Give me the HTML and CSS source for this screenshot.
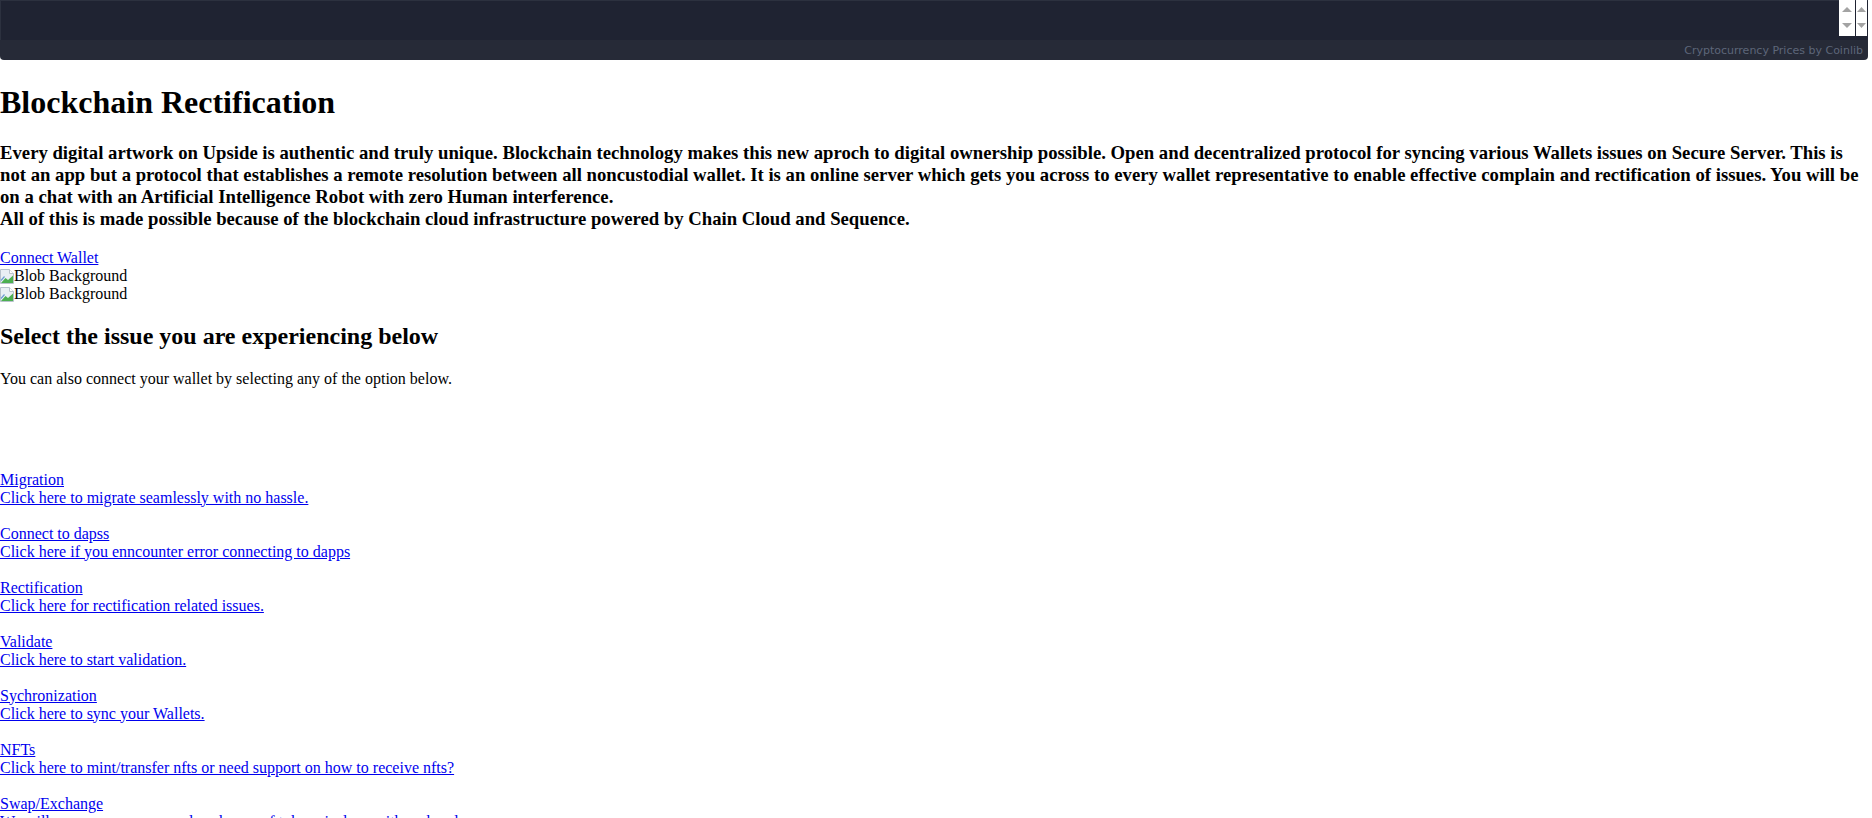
FILE: index.html
```html
<!DOCTYPE html>
<html lang="en">
<head>
<meta charset="utf-8">
<title>Blockchain Rectification</title>
<link rel="stylesheet" href="styles.css">
</head>
<body>
<div class="ticker">
  <div class="ticker-main">
    <div class="spin">
      <svg width="16" height="36" viewBox="0 0 16 36"><polygon points="3,12 13,12 8,7" fill="#a3a3a3"/><polygon points="3,23 13,23 8,28" fill="#a3a3a3"/></svg>
    </div>
    <div class="spin spin-b">
      <svg width="11" height="36" viewBox="0 0 11 36"><polygon points="1,12 10,12 5.5,7" fill="#a3a3a3"/><polygon points="1,23 10,23 5.5,28" fill="#a3a3a3"/></svg>
    </div>
  </div>
  <div class="ticker-foot">Cryptocurrency Prices by Coinlib</div>
</div>

<h1 class="title">Blockchain Rectification</h1>
<h3 class="intro">Every digital artwork on Upside is authentic and truly unique. Blockchain technology makes this new aproch to digital ownership possible. Open and decentralized protocol for syncing various Wallets issues on Secure Server. This is not an app but a protocol that establishes a remote resolution between all noncustodial wallet. It is an online server which gets you across to every wallet representative to enable effective complain and rectification of issues. You will be on a chat with an Artificial Intelligence Robot with zero Human interference.<br>All of this is made possible because of the blockchain cloud infrastructure powered by Chain Cloud and Sequence.</h3>

<a class="connect" href="#">Connect Wallet</a>
<div class="blob"><svg class="broken" width="14" height="16" viewBox="0 0 14 16"><path d="M0.5 1.5h9l4 4v10h-13z" fill="#e9eff4" stroke="#b8c2cc"/><path d="M9.5 1.5v4h4" fill="#ffffff" stroke="#b8c2cc"/><path d="M1 15l4.5-5 2.5 2 5-4.5v7.5z" fill="#4caf50"/><path d="M1 12.5l3.5-4" stroke="#6b9bd1" stroke-width="1.2"/></svg><span>Blob Background</span></div>
<div class="blob"><svg class="broken" width="14" height="16" viewBox="0 0 14 16"><path d="M0.5 1.5h9l4 4v10h-13z" fill="#e9eff4" stroke="#b8c2cc"/><path d="M9.5 1.5v4h4" fill="#ffffff" stroke="#b8c2cc"/><path d="M1 15l4.5-5 2.5 2 5-4.5v7.5z" fill="#4caf50"/><path d="M1 12.5l3.5-4" stroke="#6b9bd1" stroke-width="1.2"/></svg><span>Blob Background</span></div>

<h2 class="select">Select the issue you are experiencing below</h2>
<p class="sub">You can also connect your wallet by selecting any of the option below.</p>

<div class="options">
  <div class="option"><a href="#">Migration<br>Click here to migrate seamlessly with no hassle.</a></div>
  <div class="option"><a href="#">Connect to dapss<br>Click here if you enncounter error connecting to dapps</a></div>
  <div class="option"><a href="#">Rectification<br>Click here for rectification related issues.</a></div>
  <div class="option"><a href="#">Validate<br>Click here to start validation.</a></div>
  <div class="option"><a href="#">Sychronization<br>Click here to sync your Wallets.</a></div>
  <div class="option"><a href="#">NFTs<br>Click here to mint/transfer nfts or need support on how to receive nfts?</a></div>
  <div class="option"><a href="#">Swap/Exchange<br>We will ensure your swap and exchange of tokens is done with no hassle.</a></div>
</div>
</body>
</html>
```

FILE: styles.css
```css
html, body {
  margin: 0;
  padding: 0;
  background: #ffffff;
}

body {
  font-family: "Liberation Serif", "Times New Roman", serif;
  font-size: 16px;
  color: #000000;
}

a {
  color: #0000ee;
}

.ticker {
  width: 1868px;
  height: 60px;
  background: #262a37;
  border-radius: 0 0 4px 4px;
  overflow: hidden;
  display: flex;
  flex-direction: column;
}

.ticker-main {
  height: 40px;
  box-sizing: border-box;
  background: #1f2332;
  border-top: 1px solid #2c313f;
  border-left: 1px solid #2c313f;
  display: flex;
  justify-content: flex-end;
  align-items: flex-start;
}

.spin {
  width: 16px;
  height: 36px;
  background: #ffffff;
  margin-top: -1px;
  margin-right: 1px;
}

.spin-b {
  width: 11px;
  margin-right: 1px;
}

.spin svg {
  display: block;
}

.ticker-foot {
  flex: 1;
  display: flex;
  align-items: center;
  justify-content: flex-end;
  padding-right: 5px;
  font-family: "DejaVu Sans", Verdana, sans-serif;
  font-size: 11px;
  color: #5d6679;
}

.title {
  font-size: 32px;
  margin: 24px 0 21px;
}

.intro {
  font-size: 18.72px;
  margin: 18.72px 0;
}

.connect {
  display: inline-block;
}

.blob {
  display: flex;
  align-items: center;
  height: 18px;
}

.broken {
  display: block;
  flex: none;
}

.select {
  font-size: 24px;
  margin: 19.92px 0;
}

.sub {
  margin: 16px 0;
}

.options {
  padding-top: 67px;
}

.option {
  margin-bottom: 18px;
}
```
